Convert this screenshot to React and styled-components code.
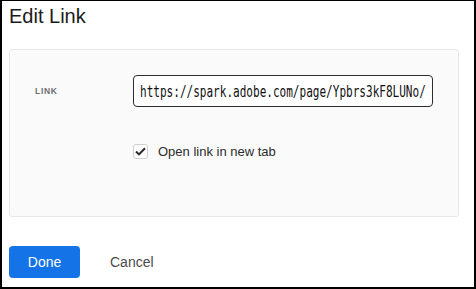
import React, { useState } from "react";
import styled, { createGlobalStyle } from "styled-components";

const GlobalStyle = createGlobalStyle`
  html, body {
    margin: 0;
    padding: 0;
    background: #ffffff;
  }
  body {
    font-family: "Liberation Sans", Arial, sans-serif;
  }
`;

const Frame = styled.div`
  width: 476px;
  height: 289px;
  box-sizing: border-box;
  border: 2px solid #000;
  border-top-width: 1px;
  padding: 3px 15px 0 7px;
  background: #fff;
`;

const Title = styled.h1`
  margin: 0;
  font-size: 20px;
  line-height: 24px;
  font-weight: 400;
  color: #1b1b1b;
`;

const Panel = styled.div`
  margin-top: 21px;
  height: 168px;
  box-sizing: border-box;
  background: #fafafa;
  border: 1px solid #e8e8e8;
  border-radius: 3px;
  padding: 25px 25px 0 25px;
  display: grid;
  grid-template-columns: 98px 1fr;
  grid-template-rows: 32px 15px;
  align-content: start;
  row-gap: 37px;
  align-items: center;
`;

const Label = styled.label`
  font-size: 8.5px;
  font-weight: 700;
  letter-spacing: 0.7px;
  color: #6e6e6e;
  text-transform: uppercase;
`;

const LinkBox = styled.div`
  height: 32px;
  box-sizing: border-box;
  border: 1px solid #2c2c2c;
  border-radius: 4px;
  background: #fff;
  padding-left: 6px;
  display: flex;
  align-items: center;
  overflow: hidden;
  white-space: nowrap;
`;

const LinkText = styled.span`
  display: inline-block;
  font-family: "DejaVu Sans Mono", monospace;
  font-size: 16px;
  color: #111;
  transform: scaleX(0.69);
  transform-origin: left center;
`;

const CheckRow = styled.label`
  grid-column: 2;
  display: flex;
  align-items: center;
  gap: 10px;
  font-size: 13px;
  color: #2c2c2c;
  cursor: pointer;
`;

const Box = styled.span`
  width: 15px;
  height: 15px;
  box-sizing: border-box;
  border: 1px solid #cfcfcf;
  border-radius: 3px;
  background: #fff;
  display: flex;
  align-items: center;
  justify-content: center;
`;

const Actions = styled.div`
  margin-top: 29px;
  display: flex;
  align-items: center;
`;

const Button = styled.button`
  height: 32px;
  border: none;
  border-radius: 4px;
  font-family: "Liberation Sans", Arial, sans-serif;
  font-size: 14px;
  cursor: pointer;
  padding: 0;
  background: ${(p) => (p.$primary ? "#1473e6" : "transparent")};
  color: ${(p) => (p.$primary ? "#fff" : "#4b4b4b")};
  width: ${(p) => (p.$primary ? "71px" : "auto")};
  margin-left: ${(p) => (p.$primary ? "0" : "30px")};
`;

export default function App() {
  const [newTab, setNewTab] = useState(true);

  return (
    <Frame>
      <GlobalStyle />
      <Title>Edit Link</Title>
      <Panel>
        <Label>Link</Label>
        <LinkBox>
          <LinkText>https://spark.adobe.com/page/Ypbrs3kF8LUNo/</LinkText>
        </LinkBox>
        <CheckRow onClick={() => setNewTab(!newTab)}>
          <Box>
            {newTab && (
              <svg width="11" height="9" viewBox="0 0 11 9">
                <polyline
                  points="1,4.6 4,7.4 10,1.2"
                  fill="none"
                  stroke="#2a2a2a"
                  strokeWidth="2"
                />
              </svg>
            )}
          </Box>
          Open link in new tab
        </CheckRow>
      </Panel>
      <Actions>
        <Button $primary>Done</Button>
        <Button>Cancel</Button>
      </Actions>
    </Frame>
  );
}
